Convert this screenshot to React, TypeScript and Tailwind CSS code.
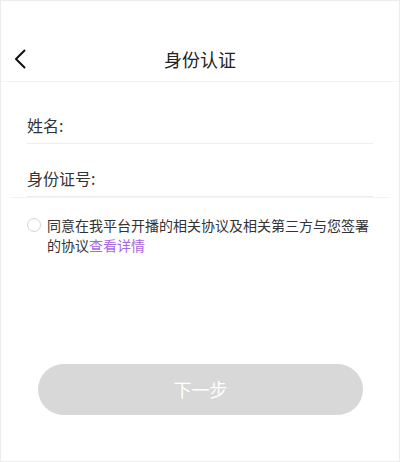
import React from 'react';

const App: React.FC = () => {
  return (
    <div
      className="w-[400px] h-[462px] border border-[#ececec] bg-white text-[#222]"
      style={{ fontFamily: '"Noto Sans CJK SC", "Noto Sans", sans-serif' }}
    >
      {/* Header */}
      <div className="pt-[35px] border-b border-[#f3f3f3]">
        <div className="relative h-[45px] flex items-center justify-center">
          <button className="absolute left-[13px] top-1/2 -translate-y-1/2">
            <svg width="12" height="20" viewBox="0 0 12 20" fill="none">
              <polyline
                points="10.5,1.5 2,10 10.5,18.5"
                stroke="#111"
                strokeWidth="2"
                strokeLinecap="round"
                strokeLinejoin="round"
              />
            </svg>
          </button>
          <span className="text-[18px] leading-[24px]">身份认证</span>
        </div>
      </div>

      {/* Form */}
      <div className="mx-[26px] pt-[31px] pb-[6px] border-b border-[#eeeeee]">
        <span className="text-[16px] leading-[24px] text-[#333]">姓名:</span>
      </div>
      <div className="mx-[26px] pt-[22px] pb-[6px] border-b border-[#ebebeb]">
        <span className="text-[16px] leading-[24px] text-[#333]">身份证号:</span>
      </div>
      <div className="mx-[9px] h-px bg-[#f3f3f3]" />

      {/* Agreement */}
      <div className="flex items-start gap-[6px] pl-[26px] pt-[17px]">
        <span className="mt-[3px] w-[14px] h-[14px] shrink-0 rounded-full border border-[#d4d4d4]" />
        <div className="w-[327px] text-[14px] leading-[20px] text-[#333]">
          <p>同意在我平台开播的相关协议及相关第三方与您签署</p>
          <p>
            <span>的协议</span>
            <span className="text-[#a866e0]">查看详情</span>
          </p>
        </div>
      </div>

      {/* Next button */}
      <div className="pt-[109px] pl-[37px]">
        <button className="w-[325px] h-[51px] rounded-full bg-[#d8d8d8] text-white text-[18px]">
          下一步
        </button>
      </div>
    </div>
  );
};

export default App;
